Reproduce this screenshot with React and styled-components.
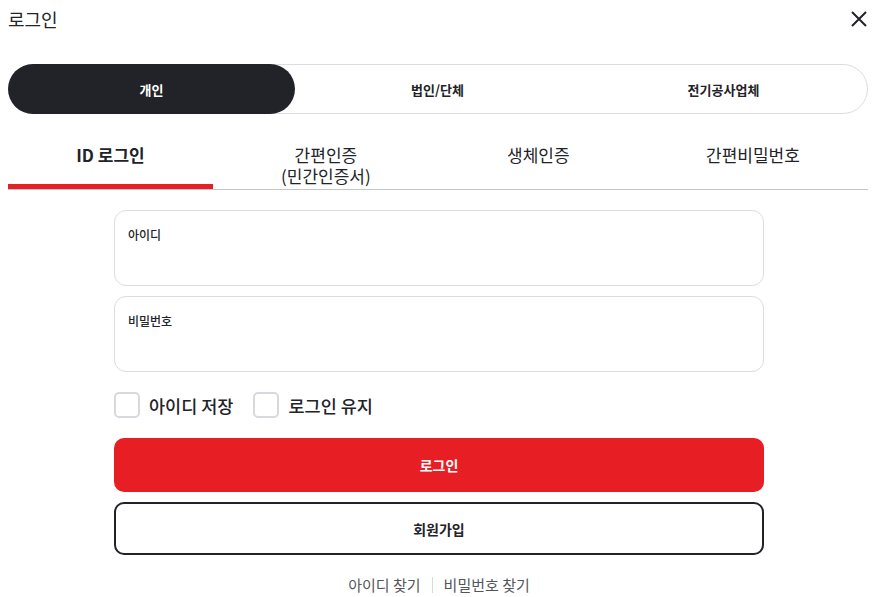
import React, { useState } from "react";
import styled, { createGlobalStyle } from "styled-components";

const GlobalStyle = createGlobalStyle`
  body {
    margin: 0;
    background: #ffffff;
    font-family: "Noto Sans CJK KR", "Noto Sans", sans-serif;
    color: #222328;
  }
`;

const Page = styled.div`
  width: 876px;
  padding: 0 8px;
  box-sizing: border-box;
  display: flex;
  flex-direction: column;
`;

const Header = styled.div`
  height: 38px;
  display: flex;
  align-items: center;
  justify-content: space-between;
`;

const Title = styled.h1`
  margin: 0;
  font-size: 18px;
  font-weight: 400;
  color: #222328;
`;

const CloseButton = styled.button`
  border: none;
  background: none;
  padding: 0;
  margin-right: -1px;
  width: 20px;
  height: 20px;
  display: flex;
  align-items: center;
  justify-content: center;
  cursor: pointer;
`;

const Segment = styled.div`
  margin-top: 26px;
  height: 50px;
  border: 1px solid #dcdde3;
  border-radius: 25px;
  box-sizing: border-box;
  display: grid;
  grid-template-columns: repeat(3, minmax(0, 1fr));
`;

const SegmentItem = styled.button`
  border: none;
  padding: 0;
  margin: -1px 0 -1px -1px;
  border-radius: 25px;
  font-family: inherit;
  font-size: 13px;
  font-weight: 700;
  background: ${(p) => (p.$active ? "#222328" : "transparent")};
  color: ${(p) => (p.$active ? "#ffffff" : "#222328")};
  cursor: pointer;
`;

const Tabs = styled.div`
  margin-top: 26px;
  display: flex;
  border-bottom: 1px solid #c4c6cc;
`;

const Tab = styled.button`
  flex: 1 1 auto;
  border: none;
  background: none;
  padding: 4px 0 0;
  height: 49px;
  font-family: inherit;
  font-size: 17px;
  line-height: 21px;
  white-space: pre-line;
  text-align: center;
  font-weight: ${(p) => (p.$active ? 700 : 400)};
  color: #222328;
  display: flex;
  justify-content: center;
  align-items: flex-start;
  box-shadow: ${(p) => (p.$active ? "inset 0 -5px 0 #e81e25" : "none")};
  cursor: pointer;
`;

const Form = styled.div`
  width: 650px;
  margin: 20px auto 0;
  padding-left: 2px;
  display: flex;
  flex-direction: column;
`;

const Field = styled.label`
  height: 76px;
  border: 1px solid #dcdde3;
  border-radius: 12px;
  box-sizing: border-box;
  padding: 15px 13px;
  display: flex;
  flex-direction: column;
  & + & {
    margin-top: 10px;
  }
`;

const FieldLabel = styled.span`
  font-size: 12px;
  font-weight: 500;
  line-height: 18px;
  color: #222328;
`;

const FieldInput = styled.input`
  border: none;
  outline: none;
  font-family: inherit;
  font-size: 14px;
  padding: 0;
  margin-top: 6px;
  background: transparent;
`;

const Options = styled.div`
  margin-top: 20px;
  display: flex;
  align-items: center;
  gap: 20px;
`;

const Check = styled.label`
  display: flex;
  align-items: center;
  gap: 9px;
  font-size: 17.5px;
  font-weight: 500;
  color: #222328;
  cursor: pointer;
`;

const Box = styled.span`
  width: 26px;
  height: 26px;
  border: 2px solid #d7d9df;
  border-radius: 5px;
  box-sizing: border-box;
  background: ${(p) => (p.$on ? "#222328" : "#ffffff")};
`;

const Button = styled.button`
  height: ${(p) => (p.$primary ? "54px" : "53px")};
  margin-top: ${(p) => (p.$primary ? "20px" : "10px")};
  border-radius: 10px;
  border: ${(p) => (p.$primary ? "none" : "2px solid #222328")};
  background: ${(p) => (p.$primary ? "#e81e25" : "#ffffff")};
  color: ${(p) => (p.$primary ? "#ffffff" : "#222328")};
  font-family: inherit;
  font-size: 14px;
  font-weight: 700;
  cursor: pointer;
`;

const Links = styled.div`
  margin-top: 19px;
  display: flex;
  justify-content: center;
  align-items: center;
  gap: 11px;
  font-size: 15px;
  color: #55565c;
`;

const Divider = styled.span`
  width: 1px;
  height: 16px;
  background: #d7d9df;
`;

const segments = ["개인", "법인/단체", "전기공사업체"];
const tabs = ["ID 로그인", "간편인증\n(민간인증서)", "생체인증", "간편비밀번호"];

export default function App() {
  const [seg, setSeg] = useState(0);
  const [tab, setTab] = useState(0);
  const [saveId, setSaveId] = useState(false);
  const [keep, setKeep] = useState(false);

  return (
    <Page>
      <GlobalStyle />
      <Header>
        <Title>로그인</Title>
        <CloseButton aria-label="닫기">
          <svg width="18" height="18" viewBox="0 0 18 18">
            <path d="M2 2L16 16M16 2L2 16" stroke="#222328" strokeWidth="2" />
          </svg>
        </CloseButton>
      </Header>

      <Segment>
        {segments.map((s, i) => (
          <SegmentItem key={s} $active={seg === i} onClick={() => setSeg(i)}>
            {s}
          </SegmentItem>
        ))}
      </Segment>

      <Tabs>
        {tabs.map((t, i) => (
          <Tab key={t} $active={tab === i} onClick={() => setTab(i)}>
            {t}
          </Tab>
        ))}
      </Tabs>

      <Form>
        <Field>
          <FieldLabel>아이디</FieldLabel>
          <FieldInput type="text" />
        </Field>
        <Field>
          <FieldLabel>비밀번호</FieldLabel>
          <FieldInput type="password" />
        </Field>

        <Options>
          <Check onClick={() => setSaveId(!saveId)}>
            <Box $on={saveId} />
            아이디 저장
          </Check>
          <Check onClick={() => setKeep(!keep)}>
            <Box $on={keep} />
            로그인 유지
          </Check>
        </Options>

        <Button $primary>로그인</Button>
        <Button>회원가입</Button>

        <Links>
          <span>아이디 찾기</span>
          <Divider />
          <span>비밀번호 찾기</span>
        </Links>
      </Form>
    </Page>
  );
}
